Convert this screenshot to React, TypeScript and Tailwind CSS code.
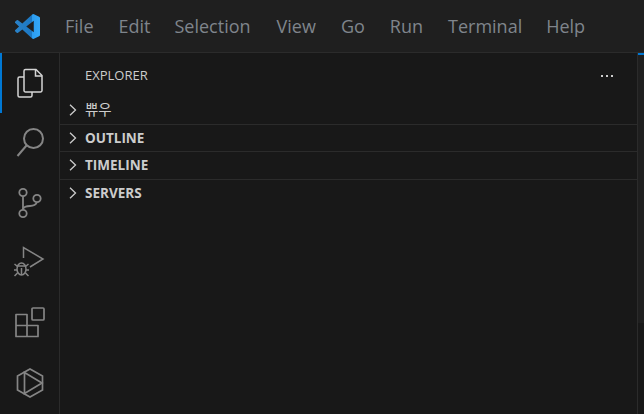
const menus = [
  { label: "File", gap: "mr-[25px]" },
  { label: "Edit", gap: "mr-[24px]" },
  { label: "Selection", gap: "mr-[26px]" },
  { label: "View", gap: "mr-[25px]" },
  { label: "Go", gap: "mr-[25px]" },
  { label: "Run", gap: "mr-[25px]" },
  { label: "Terminal", gap: "mr-[24px]" },
  { label: "Help", gap: "" },
];
const sections = ["쀼우", "OUTLINE", "TIMELINE", "SERVERS"];

function Logo() {
  return (
    <svg width="25" height="25" viewBox="0 0 24 24">
      <defs>
        <linearGradient id="vs" x1="0" x2="1" y1="0" y2="0">
          <stop offset="0" stopColor="#2a82c8" />
          <stop offset="0.68" stopColor="#1b78c4" />
          <stop offset="0.7" stopColor="#2c9df0" />
          <stop offset="1" stopColor="#34a8f8" />
        </linearGradient>
      </defs>
      <path
        fill="url(#vs)"
        d="M23.15 2.587 18.21.21a1.494 1.494 0 0 0-1.705.29l-9.46 8.63-4.12-3.128a.999.999 0 0 0-1.276.057L.327 7.261A1 1 0 0 0 .326 8.74L3.899 12 .326 15.26a1 1 0 0 0 .001 1.479L1.65 17.94a.999.999 0 0 0 1.276.057l4.12-3.128 9.46 8.63a1.492 1.492 0 0 0 1.704.29l4.942-2.377A1.5 1.5 0 0 0 24 20.06V3.939a1.5 1.5 0 0 0-.85-1.352zm-5.146 14.861L10.826 12l7.178-5.448v10.896z"
      />
    </svg>
  );
}

const stroke = { fill: "none", stroke: "currentColor", strokeWidth: 1.5 } as const;

function Files() {
  return (
    <svg width="30" height="32" viewBox="0 0 30 32" {...stroke} className="text-[#d4d4d4]">
      <path d="M9 10H4.5A1.5 1.5 0 0 0 3 11.5v17A1.5 1.5 0 0 0 4.5 30h11a1.5 1.5 0 0 0 1.500-1.500V25" />
      <path d="M10.500 2.500h10.500L27 8.500v15a1.500 1.500 0 0 1-1.500 1.500h-15A1.500 1.500 0 0 1 9 23.500V4a1.500 1.500 0 0 1 1.500-1.500z" />
      <path d="M20.500 2.500v6.500H27" />
    </svg>
  );
}
function Search() {
  return (
    <svg width="30" height="32" viewBox="0 0 30 32" {...stroke} strokeWidth={2}>
      <circle cx="18.500" cy="11.500" r="9.500" />
      <path d="M11.500 18.500 2.500 29" />
    </svg>
  );
}
function Git() {
  return (
    <svg width="26" height="34" viewBox="0 0 26 34" {...stroke} strokeWidth={1.800}>
      <circle cx="6" cy="6.500" r="3.700" />
      <circle cx="6" cy="27.500" r="3.700" />
      <circle cx="20" cy="12.500" r="3.700" />
      <path d="M6 10.200v13.600" />
      <path d="M6 23c1-2.500 3-3 7-3 4 0 6-1.500 7-3.800" />
    </svg>
  );
}
function Debug() {
  return (
    <svg width="32" height="34" viewBox="0 0 32 34" {...stroke}>
      <path d="M9.500 12V1.500L29 13 16 21" />
      <ellipse cx="7.500" cy="23" rx="4.500" ry="6" />
      <path d="M3.500 20h8M.5 18l3 2.500M14.500 18l-3 2.500M0 24h3M12 24h3M.5 30l3-3M14.500 30l-3-3M7.500 22v7" />
    </svg>
  );
}
function Extensions() {
  return (
    <svg width="32" height="32" viewBox="0 0 32 32" {...stroke} strokeWidth={1.700}>
      <rect x="18" y="1" width="12" height="12" rx="1" />
      <path d="M2 7.500h11v11h11v11H2z M2 18.500h11v11" strokeLinejoin="round" />
    </svg>
  );
}
function Remote() {
  return (
    <svg width="28" height="30" viewBox="0 0 28 30" {...stroke} strokeWidth={1.700}>
      <path d="M14 1 26.500 8v14L14 29 1.500 22V8z" />
      <path d="M8.500 4.500v21L26 15z" />
    </svg>
  );
}

function ActivityItem({ children, active }: { children: React.ReactNode; active?: boolean }) {
  return (
    <div className={`flex h-[60px] items-center justify-center text-[#858585] ${active ? "border-l-[2px] border-[#0078d4] pr-[2px]" : ""}`}>
      {children}
    </div>
  );
}

export default function App() {
  return (
    <div
      className="flex h-[414px] w-[644px] flex-col overflow-hidden bg-[#181818]"
      style={{ fontFamily: '"Open Sans", "Noto Sans CJK KR", sans-serif' }}
    >
      <header className="flex h-[53px] shrink-0 items-center border-b border-[#2b2b2b] bg-[#1f1f1f]">
        <div className="flex w-[53px] justify-center pl-[1px]">
          <Logo />
        </div>
        <nav className="flex items-center pl-[12px] text-[18px] text-[#7f858c]">
          {menus.map((m) => (
            <span key={m.label} className={m.gap}>{m.label}</span>
          ))}
        </nav>
      </header>
      <div className="flex min-h-0 flex-1">
        <aside className="flex w-[60px] shrink-0 flex-col border-r border-[#2b2b2b] bg-[#181818]">
          <ActivityItem active><Files /></ActivityItem>
          <ActivityItem><Search /></ActivityItem>
          <ActivityItem><Git /></ActivityItem>
          <ActivityItem><Debug /></ActivityItem>
          <ActivityItem><Extensions /></ActivityItem>
          <ActivityItem><Remote /></ActivityItem>
        </aside>
        <main className="flex min-w-0 flex-1 flex-col">
          <div className="flex h-[44px] shrink-0 items-center justify-between pl-[25px] pr-[24px] pt-[1px] text-[13px] text-[#cccccc]">
            <span>EXPLORER</span>
            <span className="flex gap-[3px]">
              <i className="h-[2px] w-[2px] bg-[#cccccc]" />
              <i className="h-[2px] w-[2px] bg-[#cccccc]" />
              <i className="h-[2px] w-[2px] bg-[#cccccc]" />
            </span>
          </div>
          {sections.map((s, i) => (
            <div
              key={s}
              className={`flex h-[27.500px] shrink-0 items-center font-bold text-[#cccccc] ${i === 0 ? "text-[14.500px]" : "text-[13.500px]"} ${i < 3 ? "border-b border-[#2b2b2b]" : ""}`}
            >
              <svg width="10" height="12" viewBox="0 0 10 12" className="ml-[8px] mr-[7px]" fill="none" stroke="currentColor" strokeWidth="1.300">
                <path d="m2 .8 5.500 5.200L2 11.200" />
              </svg>
              <span className={i === 0 ? "font-normal" : ""}>{s}</span>
            </div>
          ))}
        </main>
        <div className="flex w-[7px] shrink-0 flex-col border-l border-[#2b2b2b]">
          <div className="h-[2px] bg-[#0078d4]" />
          <div className="h-[268px] bg-[#1f1f1f]" />
        </div>
      </div>
    </div>
  );
}
